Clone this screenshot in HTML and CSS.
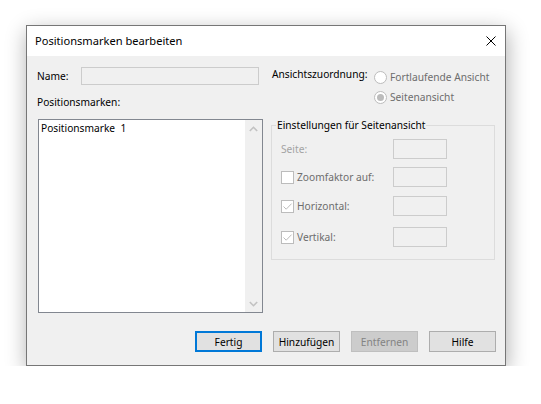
FILE: index.html
```html
<!DOCTYPE html>
<html lang="de">
<head>
<meta charset="utf-8">
<title>Positionsmarken bearbeiten</title>
<link rel="stylesheet" href="styles.css">
</head>
<body>
<div class="window">
  <div class="titlebar">
    <span class="title">Positionsmarken bearbeiten</span>
    <svg class="close" width="10" height="10" viewBox="0 0 10 10"><path d="M0.5 0.5L9.5 9.5M9.5 0.5L0.5 9.5" stroke="#000" stroke-width="1" fill="none"/></svg>
  </div>
  <div class="content">
    <div class="columns">
      <div class="left">
        <div class="name-row">
          <span class="name-label">Name:</span>
          <div class="field name-field"></div>
        </div>
        <div class="list-label">Positionsmarken:</div>
        <div class="listbox">
          <div class="items">
            <div class="item">Positionsmarke&nbsp; 1</div>
          </div>
          <div class="scrollbar">
            <div class="arrow"><svg width="9" height="6" viewBox="0 0 9 6"><path d="M0.8 5L4.5 1.3L8.2 5" stroke="#c2c2c2" stroke-width="1.6" fill="none"/></svg></div>
            <div class="arrow"><svg width="9" height="6" viewBox="0 0 9 6"><path d="M0.8 1L4.5 4.7L8.2 1" stroke="#c2c2c2" stroke-width="1.6" fill="none"/></svg></div>
          </div>
        </div>
      </div>
      <div class="right">
        <div class="view-row">
          <span class="view-label">Ansichtszuordnung:</span>
          <div class="radios">
            <div class="radio-row"><span class="radio"></span><span class="dis">Fortlaufende Ansicht</span></div>
            <div class="radio-row"><span class="radio checked"></span><span class="dis">Seitenansicht</span></div>
          </div>
        </div>
        <fieldset class="group">
          <legend>Einstellungen für Seitenansicht</legend>
          <div class="grid">
            <div class="row r1"><span class="faint">Seite:</span><div class="field small"></div></div>
            <div class="row r2"><span class="check-label"><span class="check"></span><span class="dis">Zoomfaktor auf:</span></span><div class="field small"></div></div>
            <div class="row r3"><span class="check-label"><span class="check"><svg width="11" height="11" viewBox="0 0 11 11"><path d="M1.5 5.5L4.2 8.2L9.6 2.6" stroke="#bcbcbc" stroke-width="1" fill="none"/></svg></span><span class="dis">Horizontal:</span></span><div class="field small"></div></div>
            <div class="row r4"><span class="check-label"><span class="check"><svg width="11" height="11" viewBox="0 0 11 11"><path d="M1.5 5.5L4.2 8.2L9.6 2.6" stroke="#bcbcbc" stroke-width="1" fill="none"/></svg></span><span class="dis">Vertikal:</span></span><div class="field small"></div></div>
          </div>
        </fieldset>
      </div>
    </div>
    <div class="buttons">
      <div class="btn default">Fertig</div>
      <div class="btn">Hinzufügen</div>
      <div class="btn disabled">Entfernen</div>
      <div class="btn">Hilfe</div>
    </div>
  </div>
</div>
</body>
</html>
```

FILE: styles.css
```css
* { box-sizing: border-box; }
html, body { margin: 0; padding: 0; background: #ffffff; }
body {
  font-family: "Noto Sans", "Open Sans", sans-serif;
  font-size: 10.2px;
  color: #000;
  padding: 25px 0 0 26px;
}
.window {
  width: 480px;
  height: 341px;
  border: 1px solid #767676;
  background: #f0f0f0;
  display: flex;
  flex-direction: column;
  box-shadow: 1px 6px 20px rgba(0,0,0,0.32);
}
.titlebar {
  height: 30px;
  background: #ffffff;
  display: flex;
  align-items: center;
  padding: 0 9px 0 8px;
  flex: none;
}
.title { flex: 1; line-height: 16px; font-size: 11.1px; }
.close { display: block; }
.content {
  flex: 1;
  display: flex;
  flex-direction: column;
  padding: 11px 9px 13px 10px;
}
.columns { display: flex; gap: 8px; }
.left { width: 226px; display: flex; flex-direction: column; }
.right { width: 224px; display: flex; flex-direction: column; }
.name-row { display: flex; height: 18px; align-items: center; }
.name-label { width: 44px; line-height: 16px; }
.field { background: #f0f0f0; border: 1px solid #cccccc; }
.name-field { width: 178px; height: 18px; }
.list-label { margin-top: 9px; line-height: 16px; }
.listbox {
  margin-top: 9px;
  margin-left: 1px;
  width: 225px;
  height: 194px;
  border: 1px solid #828790;
  background: #fff;
  display: flex;
}
.items { flex: 1; padding: 0 2px; }
.item { line-height: 16px; white-space: nowrap; }
.scrollbar {
  width: 17px;
  background: #f0f0f0;
  display: flex;
  flex-direction: column;
  justify-content: space-between;
}
.arrow { height: 17px; display: flex; align-items: center; justify-content: center; }
.arrow svg { display: block; }
.view-row { display: flex; align-items: flex-start; padding-left: 1px; }
.view-label { width: 102px; line-height: 15px; white-space: nowrap; }
.radios { display: flex; flex-direction: column; }
.radio-row { height: 20px; display: flex; align-items: center; gap: 3px; white-space: nowrap; }
.radio {
  width: 13px; height: 13px;
  border: 1px solid #bcbcbc;
  border-radius: 50%;
  background: #ffffff;
  display: flex; align-items: center; justify-content: center;
}
.radio.checked::after {
  content: "";
  width: 7px; height: 7px; border-radius: 50%;
  background: #bcbcbc;
}
.dis { color: #6d6d6d; line-height: 16px; }
.faint { color: #a3a3a3; line-height: 16px; }
.group {
  margin: 10px 0 0 0;
  padding: 0 0 0 0;
  min-inline-size: 0;
  border: 1px solid #dcdcdc;
  height: 143px;
}
.group legend {
  margin-left: 4px;
  padding: 0 1px;
  line-height: 16px;
}
.grid { padding: 6px 0 0 9px; display: flex; flex-direction: column; gap: 8px; }
.row { display: grid; grid-template-columns: 112px 54px; align-items: center; height: 20px; }
.r3 { margin-top: 1px; }
.r4 { margin-top: 3px; }
.small { width: 54px; height: 20px; }
.check-label { display: flex; align-items: center; gap: 3px; }
.check {
  width: 13px; height: 13px;
  border: 1px solid #bcbcbc;
  background: #ffffff;
  display: flex; align-items: center; justify-content: center;
}
.check svg { display: block; }
.buttons { margin-top: auto; display: flex; justify-content: flex-end; gap: 11px; }
.btn {
  width: 67px; height: 21px;
  background: #e1e1e1;
  border: 1px solid #adadad;
  display: flex; align-items: center; justify-content: center;
  line-height: 16px;
  white-space: nowrap;
}
.btn.default { border: 2px solid #0078d7; }
.btn.disabled { background: #cccccc; border-color: #bfbfbf; color: #838383; }
```
